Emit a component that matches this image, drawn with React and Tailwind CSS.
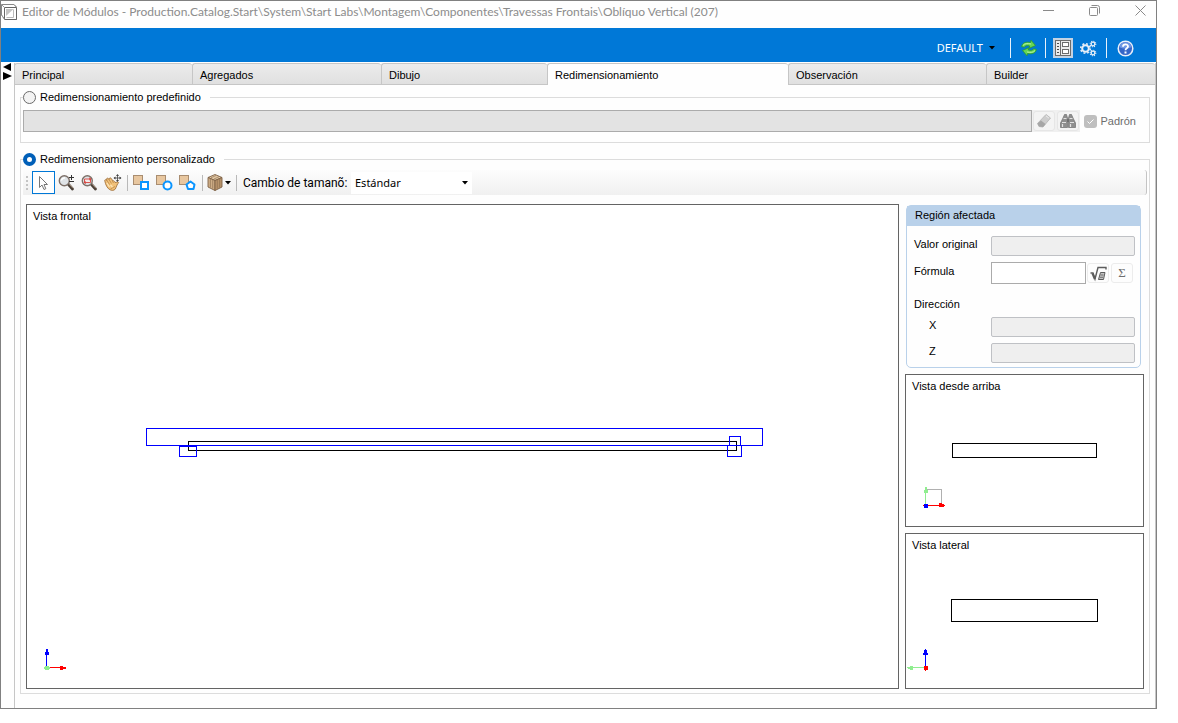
import React, { useState } from "react";

const TABS = ["Principal", "Agregados", "Dibujo", "Redimensionamiento", "Observación", "Builder"];

/* ---------- icons ---------- */

function AppIcon() {
  return (
    <svg width="17" height="17" viewBox="0 0 17 17" fill="none" stroke="#555" className="shrink-0">
      <path d="M0.500 0.500H13L15.500 3V15.500H4L0.500 11Z" fill="#fff" stroke="#888" />
      <path d="M3.500 3.500H15.500V15.500H3.500Z" stroke="#666" />
      <path d="M0.500 0.500L3.500 3.500M13 0.500L15.500 3.500M0.500 11L3.500 15.500" stroke="#999" />
      <path d="M5 5H12.500L5 12Z" fill="#c4c4c4" stroke="none" />
      <path d="M5.500 13.500H12.500V5.500" stroke="#bbb" />
    </svg>
  );
}

function Caret() {
  return (
    <svg width="6" height="4" viewBox="0 0 6 4" className="shrink-0">
      <path d="M0 0H6L3 3.500Z" fill="#000" />
    </svg>
  );
}

function RefreshIcon() {
  return (
    <svg width="18" height="18" viewBox="0 0 18 18">
      <g fill="#66d655" stroke="#2b9a2b" strokeWidth="0.800" strokeLinejoin="round">
        <path d="M1.500 7.500C2.500 3.800 6 2.300 10.500 3.600L11 1.200L15.500 6.500L9.200 9.300L9.700 7C7 6.200 5 6.600 4.300 8.300Z" />
        <path d="M16.500 10.500C15.500 14.200 12 15.700 7.500 14.400L7 16.800L2.500 11.500L8.800 8.700L8.300 11C11 11.800 13 11.400 13.700 9.700Z" />
      </g>
      <path d="M3 6.500C4.500 4.500 7.500 4.200 11 5M15 11.500C13.500 13.500 10.500 13.800 7 13" fill="none" stroke="#c0f5ad" strokeWidth="0.900" />
    </svg>
  );
}

function PropertiesIcon() {
  return (
    <svg width="16" height="16" viewBox="0 0 16 16" shapeRendering="crispEdges">
      <rect x="0.500" y="0.500" width="15" height="15" fill="#ececec" stroke="#6c6c6c" />
      <path d="M5.500 1V15" stroke="#6c6c6c" />
      <path d="M2 3.500H4M2 6.500H4M2 9.500H4M2 12.500H4" stroke="#4c4c4c" />
      <rect x="7.500" y="2.500" width="6" height="4" fill="#fff" stroke="#6c6c6c" />
      <rect x="7.500" y="9.500" width="6" height="4" fill="#fff" stroke="#6c6c6c" />
    </svg>
  );
}

function GearsIcon() {
  return (
    <svg width="17" height="17" viewBox="0 0 17 17" fill="none" stroke="#e6eef7">
      <circle cx="5.500" cy="8.500" r="3.300" strokeWidth="2" />
      <circle cx="5.500" cy="8.500" r="4.800" strokeWidth="1.600" strokeDasharray="1.900 1.870" />
      <circle cx="13" cy="4" r="1.800" strokeWidth="1.300" />
      <circle cx="13" cy="4" r="2.800" strokeWidth="1.100" strokeDasharray="1.100 1.100" />
      <circle cx="13" cy="13" r="1.800" strokeWidth="1.300" />
      <circle cx="13" cy="13" r="2.800" strokeWidth="1.100" strokeDasharray="1.100 1.100" />
    </svg>
  );
}

function HelpIcon() {
  return (
    <svg width="17" height="17" viewBox="0 0 17 17">
      <circle cx="8.500" cy="8.500" r="7.300" fill="#3566c8" stroke="#e8effa" strokeWidth="1.500" />
      <path d="M2.500 7A6.200 6.200 0 0 1 14.500 7C11 9 6 9 2.500 7Z" fill="#6f98e4" />
      <path d="M6 6.700C6 3.500 11 3.600 11 6.500C11 8.400 8.500 8.300 8.500 10.200" fill="none" stroke="#fff" strokeWidth="1.800" />
      <rect x="7.500" y="11.500" width="2" height="2" fill="#fff" />
    </svg>
  );
}

function EraserIcon() {
  return (
    <svg width="16" height="16" viewBox="0 0 16 16">
      <path d="M10 1.500L14.500 5L7 14L3 13.500L1.500 10.500Z" fill="#cdcdcd" stroke="#bdbdbd" />
      <path d="M5 7.500L9.500 11L7 14L3 13.500L1.500 10.500Z" fill="#a6a6a6" />
      <path d="M10 2.800L12.800 5" stroke="#f0f0f0" />
    </svg>
  );
}

function BinocularsIcon() {
  return (
    <svg width="16" height="16" viewBox="0 0 16 16">
      <path d="M3 5L4.500 1.500H6.500L7.500 5V14.500H0.500V10Z" fill="#8f8f8f" stroke="#707070" strokeWidth="0.700" />
      <path d="M13 5L11.500 1.500H9.500L8.500 5V14.500H15.500V10Z" fill="#8f8f8f" stroke="#707070" strokeWidth="0.700" />
      <path d="M2 9.500H6M10 9.500H14M3.500 5.500H6.500M9.500 5.500H12.500M2.500 11V14M10.500 11V14" stroke="#e2e2e2" strokeWidth="1.200" />
      <rect x="7" y="6" width="2" height="3" fill="#707070" />
    </svg>
  );
}

function PointerIcon() {
  return (
    <svg width="16" height="16" viewBox="0 0 16 16">
      <path d="M3.500 1.500V12.500L6 10L8 14.500L9.800 13.700L8 9.500H11.500Z" fill="#fff" stroke="#777" />
    </svg>
  );
}

function Magnifier({ children }) {
  return (
    <svg width="18" height="18" viewBox="0 0 18 18">
      <path d="M10.500 10.500L14.500 15" stroke="#4a4038" strokeWidth="2.800" strokeLinecap="round" />
      <path d="M11.300 10.300L15 14.300" stroke="#b39c84" strokeWidth="0.900" />
      <circle cx="6.300" cy="6.700" r="5" fill="#dfe3e6" stroke="#7d7068" strokeWidth="1.400" />
      {children}
    </svg>
  );
}

function ZoomInOutIcon() {
  return (
    <Magnifier>
      <path d="M3.500 6.500A3 3 0 0 1 7 4" stroke="#fff" strokeWidth="1.500" fill="none" />
      <path d="M13.500 1V6M11 3.500H16M11 7.500H16" stroke="#333" shapeRendering="crispEdges" />
    </Magnifier>
  );
}

function ZoomWindowIcon() {
  return (
    <Magnifier>
      <path d="M3.500 5H9.500V8.500H3.500Z" fill="#f3e9e8" stroke="#d8453f" strokeWidth="0.900" />
      <path d="M8.300 3.200L10.500 5L8.300 6.500ZM4.700 7L2.500 8.500L4.700 10.300Z" fill="#d8453f" />
    </Magnifier>
  );
}

function HandIcon() {
  return (
    <svg width="18" height="18" viewBox="0 0 18 18">
      <path
        d="M0.700 6.500C0.800 5.500 2 5.300 3 6.500L2.500 4.800C3 3.700 4.500 4 5 5.500L5.500 4.200C6.500 3.300 7.500 4.300 8.500 6.500C10 6.500 10.700 7.500 11 8.500L14 7.800C15 8.300 14.500 9.500 13.500 10L12 13.500C11.500 16 9 17 6.500 16C3.500 14.800 1.500 11 0.700 6.500Z"
        fill="#f2c27a"
        stroke="#9a6a34"
        strokeWidth="0.800"
      />
      <path d="M3 6.500L5.500 10.500M5 5.500L7.500 9.500M8.200 6.500L9.500 9M6.500 15L11 12.500" stroke="#b5803f" strokeWidth="0.700" fill="none" />
      <path d="M3 9L5.500 13M6.500 11L8.500 13" stroke="#fde6b8" strokeWidth="1.200" />
      <path d="M13.500 0L15 2H12ZM13.500 8L15 6H12ZM9.500 4L11.500 2.500V5.500ZM17.500 4L15.500 2.500V5.500Z" fill="#444" />
      <path d="M13.500 1V7M10 4H17" stroke="#444" strokeWidth="0.800" />
    </svg>
  );
}

function ShapeIcon({ children }) {
  return (
    <svg width="17" height="17" viewBox="0 0 17 17">
      <rect x="0.500" y="1.500" width="9" height="9" fill="#e8c7a0" stroke="#a98d70" />
      <g fill="#fff" stroke="#0a95ff" strokeWidth="2">{children}</g>
    </svg>
  );
}

function CubeIcon() {
  return (
    <svg width="17" height="17" viewBox="0 0 17 17" strokeLinejoin="round">
      <path d="M8 0.500L15 3.500L8 6.500L1 3.500Z" fill="#e3c9a6" stroke="#7d6146" strokeWidth="0.900" />
      <path d="M1 3.500L8 6.500V16.500L1 13Z" fill="#cfae87" stroke="#7d6146" strokeWidth="0.900" />
      <path d="M15 3.500L8 6.500V16.500L15 13Z" fill="#b9946b" stroke="#7d6146" strokeWidth="0.900" />
      <path d="M3.400 5V13.500M5.700 6V14.500M10.300 6V14.500M12.600 5V13.500M4 3.800L9 1.500M7 5L12 2.700" stroke="#84684c" strokeWidth="0.600" />
    </svg>
  );
}

function FormulaIcon() {
  return (
    <svg width="17" height="17" viewBox="0 0 17 17" fill="none" stroke="#5c5c5c">
      <path d="M0.500 8H3L5 14L8 2.500H16V4.500" strokeWidth="1.400" />
      <path d="M2.500 8.500L4.800 14" strokeWidth="2" />
      <path d="M10.500 7.500H15L13.500 14.500H8.500Z" fill="#c4c4c4" />
      <path d="M10.500 10H13.500M10 12.300H13" strokeWidth="0.800" />
    </svg>
  );
}

/* ---------- building blocks ---------- */

function ToolButton({ label, selected, children }) {
  return (
    <button
      type="button"
      aria-label={label}
      aria-pressed={selected}
      className={
        selected
          ? "flex h-[23px] w-[23px] shrink-0 items-center justify-center border border-[#0078d7] bg-white"
          : "flex h-[23px] w-[23px] shrink-0 items-center justify-center"
      }
    >
      {children}
    </button>
  );
}

function Separator({ className = "mr-1" }) {
  return <span className={"ml-[3px] h-4 w-px shrink-0 bg-[#b9b9b9] " + className} />;
}

function HeaderSeparator() {
  return <span className="h-5 w-px shrink-0 bg-[#e8f1fa]" />;
}

function FlatButton({ label, disabled, children }) {
  return (
    <button
      type="button"
      aria-label={label}
      disabled={disabled}
      className="flex h-5 w-[22px] shrink-0 items-center justify-center rounded-[3px] border border-[#ececec] bg-[#fdfdfd]"
    >
      {children}
    </button>
  );
}

function View({ title, viewBox, className, children }) {
  return (
    <section className={"flex min-w-0 flex-col border border-[#646464] bg-white " + className}>
      <h2 className="h-5 shrink-0 px-1.5 pt-[3px] leading-4">{title}</h2>
      <svg viewBox={viewBox} className="h-0 min-h-0 w-full flex-1" shapeRendering="crispEdges" fill="none">
        {children}
      </svg>
    </section>
  );
}

function FieldRow({ id, label, indent, children }) {
  return (
    <div className="flex items-center">
      <label htmlFor={id} className={indent ? "w-[77px] shrink-0 pb-1 pl-[15px]" : "w-[77px] shrink-0 pb-1"}>
        {label}
      </label>
      {children}
    </div>
  );
}

const READONLY = "h-5 min-w-0 flex-1 rounded-[2px] border border-[#bfc1c5] bg-[#efefef] px-1";

/* ---------- page ---------- */

export default function App() {
  const [mode, setMode] = useState("custom");
  const radio =
    "h-[13px] w-[13px] shrink-0 appearance-none rounded-full border border-[#6a6a6a] bg-[#f3f3f3] checked:border-4 checked:border-[#005fb8] checked:bg-white";

  return (
    <div className="flex min-h-screen flex-col bg-white pr-[21px] pb-[14px] font-['Liberation_Sans',Arial,sans-serif] text-[11px] leading-4 text-black">
      <div className="flex flex-1 flex-col border border-[#808080] bg-[#fefefe]">
        <header className="flex h-[27px] shrink-0 items-start justify-between">
          <div className="flex min-w-0 items-center gap-1 pt-0.5">
            <AppIcon />
            <h1 className="truncate font-[Lato,'Open_Sans',sans-serif] text-[12px] leading-[18px] text-[#8c8c8c]">
              Editor de Módulos - Production.Catalog.Start\System\Start Labs\Montagem\Componentes\Travessas Frontais\Oblíquo Vertical (207)
            </h1>
          </div>
          <div className="flex shrink-0 gap-[14px]">
            <button type="button" aria-label="Minimizar" className="flex h-[19px] w-8 items-center justify-center">
              <svg width="11" height="11" viewBox="0 0 11 11" stroke="#8a8a8a" fill="none"><path d="M0 5.500H11" /></svg>
            </button>
            <button type="button" aria-label="Restaurar" className="flex h-[19px] w-8 items-center justify-center">
              <svg width="11" height="11" viewBox="0 0 11 11" stroke="#8a8a8a" fill="none">
                <rect x="0.500" y="2.500" width="8" height="8" rx="1" />
                <path d="M2.500 0.500H8.500Q10.500 0.500 10.500 2.500V8.500" />
              </svg>
            </button>
            <button type="button" aria-label="Cerrar" className="flex h-[19px] w-8 items-center justify-center">
              <svg width="11" height="11" viewBox="0 0 11 11" stroke="#8a8a8a" fill="none"><path d="M0.500 0.500L10.500 10.500M10.500 0.500L0.500 10.500" /></svg>
            </button>
          </div>
        </header>

        <div className="flex h-[34px] shrink-0 items-center justify-end bg-[#0078d7] pt-1.5 pr-[22px]">
          <button type="button" className="mr-[15px] flex items-center gap-1.5 font-['Noto_Sans','Open_Sans',sans-serif] text-[11px] text-white">
            DEFAULT
            <Caret />
          </button>
          <HeaderSeparator />
          <button type="button" aria-label="Actualizar" className="mr-[7px] ml-[9px]"><RefreshIcon /></button>
          <HeaderSeparator />
          <button type="button" aria-label="Propiedades" aria-pressed="true" className="ml-[7px] flex h-5 w-5 items-center justify-center bg-[#c4d3e3]">
            <PropertiesIcon />
          </button>
          <button type="button" aria-label="Configuración" className="mr-[9px] ml-[7px]"><GearsIcon /></button>
          <HeaderSeparator />
          <button type="button" aria-label="Ayuda" className="ml-[10px]"><HelpIcon /></button>
        </div>

        <div className="flex flex-1 pt-px">
          <button type="button" aria-label="Mostrar u ocultar el panel" className="flex w-[13px] shrink-0 items-start pl-0.5">
            <svg width="9" height="18" viewBox="0 0 9 18"><path d="M8 0V8L0 4ZM0 9V17L9 13Z" fill="#000" /></svg>
          </button>

          <div className="flex min-w-0 flex-1 flex-col border-x border-[#c6c6c6]">
            <div role="tablist" className="-ml-px grid h-[22px] shrink-0 grid-cols-[178fr_189fr_166fr_241fr_198fr_169fr]">
              {TABS.map((tab) => (
                <button
                  key={tab}
                  type="button"
                  role="tab"
                  aria-selected={tab === "Redimensionamiento"}
                  className={
                    tab === "Redimensionamiento"
                      ? "truncate rounded-t-[3px] border-t border-l border-[#c6c6c6] bg-[#fefefe] px-[7px] text-left"
                      : "truncate rounded-t-[3px] border-y border-l border-[#c6c6c6] bg-linear-to-b from-[#ececec] to-[#e0e0e0] px-[7px] pt-px text-left"
                  }
                >
                  {tab}
                </button>
              ))}
            </div>

            <div className="flex flex-1 flex-col pt-[3px] pr-[5px] pb-[14px] pl-[5px]">
              <fieldset className="min-w-0 border border-[#dcdcdc] px-0.5 pt-1 pb-[10px]">
                <legend className="flex h-[18px] items-center pr-[9px]">
                  <label className="flex items-center gap-1">
                    <input type="radio" name="mode" checked={mode === "preset"} onChange={() => setMode("preset")} className={radio} />
                    Redimensionamiento predefinido
                  </label>
                </legend>
                <div className="flex h-[22px] items-center">
                  <input aria-label="Redimensionamiento predefinido" disabled className="h-[22px] min-w-0 flex-1 border border-[#ababab] bg-[#e3e3e3] px-1" />
                  <div className="flex h-[22px] items-center gap-0.5 bg-[#f0f0f0] px-px">
                    <button type="button" aria-label="Borrar" disabled className="flex h-5 w-[22px] items-center justify-center rounded-[3px] border border-[#e6e6e6] bg-[#f4f4f4]"><EraserIcon /></button>
                    <button type="button" aria-label="Buscar" disabled className="flex h-5 w-[22px] items-center justify-center rounded-[3px] border border-[#e6e6e6] bg-[#f4f4f4]"><BinocularsIcon /></button>
                  </div>
                  <label className="flex items-center gap-1 pr-[11px] pl-[4px] text-[#6d6d6d]">
                    <span className="grid h-[13px] w-[13px]">
                      <input type="checkbox" defaultChecked disabled className="col-start-1 row-start-1 h-[13px] w-[13px] appearance-none rounded-[3px] bg-[#bfbfbf]" />
                      <svg viewBox="0 0 13 13" className="col-start-1 row-start-1 h-[13px] w-[13px]" fill="none" stroke="#fff"><path d="M3.500 6.500L5.500 8.500L9.500 4.500" /></svg>
                    </span>
                    Padrón
                  </label>
                </div>
              </fieldset>

              <fieldset className="mt-[7px] flex min-w-0 flex-1 flex-col border border-[#dcdcdc] px-0.5 pt-0.5 pb-1">
                <legend className="flex h-[18px] items-center pr-[9px]">
                  <label className="flex items-center gap-1">
                    <input type="radio" name="mode" checked={mode === "custom"} onChange={() => setMode("custom")} className={radio} />
                    Redimensionamiento personalizado
                  </label>
                </legend>

                <div role="toolbar" className="flex h-[25px] shrink-0 items-center rounded-r-[3px] border-r border-[#c4c4c4] bg-linear-to-b from-[#fdfdfd] to-[#f0f0f0] pl-[3px]">
                  <svg width="2" height="14" viewBox="0 0 2 14" className="mr-1 shrink-0"><path d="M0 0H2V2H0ZM0 4H2V6H0ZM0 8H2V10H0ZM0 12H2V14H0Z" fill="#c4c4c4" /></svg>
                  <ToolButton label="Seleccionar" selected><PointerIcon /></ToolButton>
                  <ToolButton label="Acercar o alejar"><ZoomInOutIcon /></ToolButton>
                  <ToolButton label="Zoom de ventana"><ZoomWindowIcon /></ToolButton>
                  <ToolButton label="Mover"><HandIcon /></ToolButton>
                  <Separator className="mr-0.5" />
                  <ToolButton label="Rectángulo"><ShapeIcon><rect x="8" y="8" width="7" height="7" /></ShapeIcon></ToolButton>
                  <ToolButton label="Círculo"><ShapeIcon><circle cx="11.500" cy="11.500" r="4" /></ShapeIcon></ToolButton>
                  <ToolButton label="Polígono"><ShapeIcon><path d="M11.500 7.500L15.500 10.500L14.500 15H9L7.500 10.500Z" strokeLinejoin="round" /></ShapeIcon></ToolButton>
                  <Separator />
                  <button type="button" aria-label="Vista 3D" className="flex h-[23px] items-center gap-px pr-0.5">
                    <CubeIcon />
                    <Caret />
                  </button>
                  <Separator />
                  <label htmlFor="resize-kind" className="w-[110px] shrink-0 pl-[2px] font-[Roboto,sans-serif] text-[12px]">Cambio de tamanõ:</label>
                  <div className="flex h-[22px] w-[121px] shrink-0 items-center bg-white pr-1">
                    <select id="resize-kind" defaultValue="std" className="min-w-0 flex-1 appearance-none bg-transparent px-1 font-['Noto_Sans','Open_Sans',sans-serif] text-[11px]">
                      <option value="std">Estándar</option>
                    </select>
                    <Caret />
                  </div>
                </div>

                <div className="flex flex-1 gap-1.5 pt-[9px] pr-[3px] pl-[3px]">
                  <View title="Vista frontal" viewBox="0 0 871 463" className="flex-1">
                    <path d="M161.500 216.500H709.500V225.500H161.500Z" stroke="#000" />
                    <path d="M119.500 203.500H735.500V220.500H119.500ZM152.500 221.500H169.500V231.500H152.500ZM702.500 220.500V211.500H713.500V220.500M700.500 220.500H714.500V231.500H700.500Z" stroke="#0000ff" />
                    <path d="M19.500 427V442" stroke="#0000ff" />
                    <path d="M19 424H21V427H22V430H18V427H19Z" fill="#0000ff" />
                    <path d="M22 442.500H34" stroke="#ff0000" />
                    <path d="M33 441H36V442H39V444H36V445H33Z" fill="#ff0000" />
                    <path d="M18 441H22V442H23V444H22V445H18V444H17V442H18Z" fill="#90ee90" />
                  </View>

                  <div className="flex w-[239px] shrink-0 flex-col gap-1.5">
                    <section className="mt-px mr-[3px] ml-px rounded-[5px] border border-[#b9d1ea]">
                      <h2 className="h-5 bg-[#b9d1ea] pt-px pl-2">Región afectada</h2>
                      <div className="flex flex-col gap-1.5 pt-2.5 pr-[5px] pb-1 pl-[7px]">
                        <FieldRow id="original" label="Valor original"><input id="original" readOnly className={READONLY} /></FieldRow>
                        <FieldRow id="formula" label="Fórmula">
                          <input id="formula" className="h-[22px] min-w-0 flex-1 border border-[#ababab] bg-white px-1" />
                          <div className="flex gap-0.5 pr-0.5 pl-px">
                            <FlatButton label="Editor de fórmulas"><FormulaIcon /></FlatButton>
                            <FlatButton label="Sumatoria" disabled><span className="font-['Liberation_Serif',serif] text-[13px] text-[#6d6d6d]">Σ</span></FlatButton>
                          </div>
                        </FieldRow>
                        <h3 className="pt-[7px] leading-[14px]">Dirección</h3>
                        <FieldRow id="dir-x" label="X" indent><input id="dir-x" readOnly className={READONLY} /></FieldRow>
                        <FieldRow id="dir-z" label="Z" indent><input id="dir-z" readOnly className={READONLY} /></FieldRow>
                      </div>
                    </section>

                    <View title="Vista desde arriba" viewBox="0 0 237 131" className="h-[153px] shrink-0">
                      <path d="M46.500 48.500H190.500V62.500H46.500Z" stroke="#000" />
                      <path d="M20 94.500H35.500V110" stroke="#b0b0b0" />
                      <path d="M19.500 92V110" stroke="#90ee90" />
                      <path d="M19 92H21V95H22V98H18V95H19Z" fill="#90ee90" />
                      <path d="M17 110.500H39" stroke="#ff0000" />
                      <path d="M33 108H36V109H38V112H33Z" fill="#ff0000" />
                      <rect x="18" y="109" width="4" height="4" fill="#0000ff" />
                    </View>

                    <View title="Vista lateral" viewBox="0 0 237 134" className="min-h-[120px] flex-1">
                      <path d="M45.500 45.500H191.500V67.500H45.500Z" stroke="#000" />
                      <path d="M19.500 95V113" stroke="#0000ff" />
                      <path d="M19 95H20V96H21V99H22V101H17V99H18V96H19Z" fill="#0000ff" />
                      <path d="M1 113.500H19" stroke="#90ee90" />
                      <path d="M2 113H4V112H7V116H4V115H2Z" fill="#90ee90" />
                      <path d="M18 112H22V116H20V117H19V116H18Z" fill="#ff0000" />
                    </View>
                  </div>
                </div>
              </fieldset>
            </div>
          </div>
        </div>
      </div>
    </div>
  );
}
